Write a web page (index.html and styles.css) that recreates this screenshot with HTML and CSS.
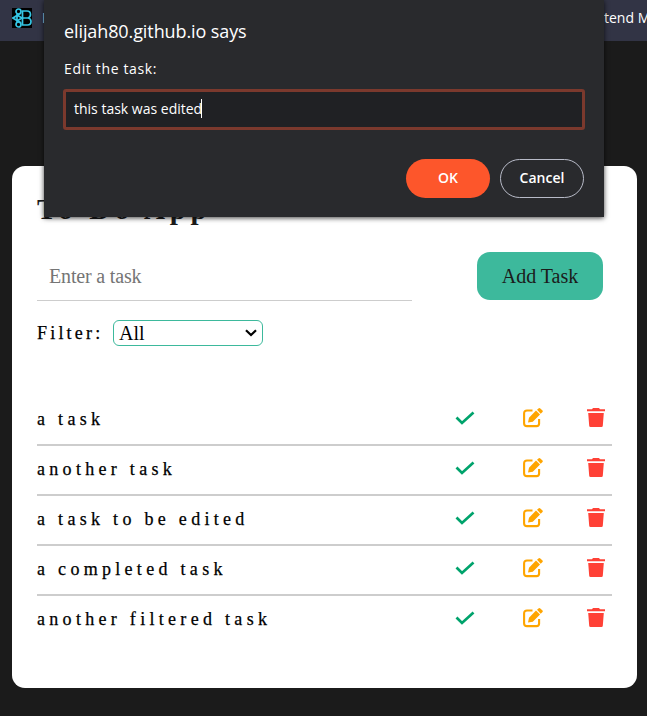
FILE: index.html
```html
<!DOCTYPE html>
<html lang="en">
<head>
<meta charset="utf-8">
<title>To-Do App</title>
<link rel="stylesheet" href="styles.css">
</head>
<body>
<svg class="sprite" aria-hidden="true">
  <symbol id="check" viewBox="0 0 20 20"><path d="M1.500 9.500 7 15 18.500 4.500" fill="none" stroke="#00a36c" stroke-width="2.700"/></symbol>
  <symbol id="edit" viewBox="0 0 20 20"><path d="M9.500 2.500H4Q1.100 2.500 1.100 5.500V15.500Q1.100 18.100 4 18.100H13.500Q16.100 18.100 16.100 15.500V11" fill="none" stroke="orange" stroke-width="2.100"/><path d="M5 14.500 6 9.800 13 2.600 17 6.500 9.800 13.700ZM14 1.800 15.800.3Q16.500-.2 17.300.5L19.500 2.500Q20.200 3.300 19.500 4L17.700 5.700Z" fill="orange"/></symbol>
  <symbol id="trash" viewBox="0 0 18 20"><path d="M0 1.300H5L6 0H12L13 1.300H18V3.200H0ZM1.200 5H16.800L15.800 17.800Q15.700 19 14.500 19H3.500Q2.300 19 2.200 17.800Z" fill="#ff4136"/></symbol>
</svg>
<nav class="bookmarks">
  <svg class="favicon" viewBox="0 0 20 20"><rect width="20" height="20" fill="#000"/><g fill="none" stroke="#35c5e4" stroke-width="1.700"><path d="M10.500 3V17H15.500Q19 17 19 13.500 19 10.500 16 10 18.500 9 18.500 6.500 18.500 3 15 3ZM10.500 10H16"/><circle cx="6.500" cy="3.500" r="2.500"/><circle cx="6.500" cy="16.500" r="2.500"/><path d="M9 5 1 10 9 15M5 6V14M5 7 10 10 5 13"/></g></svg>
  <span class="bm-first">F</span>
  <span class="bm-last">tend M</span>
</nav>
<main class="card">
  <h1>To Do App</h1>
  <div class="entry"><input type="text" placeholder="Enter a task"><button class="add">Add Task</button></div>
  <div class="filter"><span>Filter:</span><div class="select">All<svg viewBox="0 0 12 8"><path d="M1 1.200 6 6 11 1.200" fill="none" stroke="#000" stroke-width="2.200"/></svg></div></div>
  <ul class="tasks">
    <li><span>a task</span><svg class="i-check"><use href="#check"/></svg><svg class="i-edit"><use href="#edit"/></svg><svg class="i-trash"><use href="#trash"/></svg></li>
    <li><span>another task</span><svg class="i-check"><use href="#check"/></svg><svg class="i-edit"><use href="#edit"/></svg><svg class="i-trash"><use href="#trash"/></svg></li>
    <li><span>a task to be edited</span><svg class="i-check"><use href="#check"/></svg><svg class="i-edit"><use href="#edit"/></svg><svg class="i-trash"><use href="#trash"/></svg></li>
    <li><span>a completed task</span><svg class="i-check"><use href="#check"/></svg><svg class="i-edit"><use href="#edit"/></svg><svg class="i-trash"><use href="#trash"/></svg></li>
    <li><span>another filtered task</span><svg class="i-check"><use href="#check"/></svg><svg class="i-edit"><use href="#edit"/></svg><svg class="i-trash"><use href="#trash"/></svg></li>
  </ul>
</main>
<section class="dialog">
  <h2>elijah80.github.io says</h2>
  <p>Edit the task:</p>
  <div class="prompt"><span>this task was edited</span><i></i></div>
  <div class="actions"><button class="ok">OK</button><button class="cancel">Cancel</button></div>
</section>
</body>
</html>
```
FILE: styles.css
```css
* { box-sizing: border-box; }
body { margin: 0; height: 716px; overflow: hidden; background: #1b1b1b; color: #000; font-family: "Liberation Serif", serif; }
.sprite { position: absolute; width: 0; height: 0; }
.bookmarks { height: 41px; background: #323445; display: flex; align-items: flex-start; padding: 8px 0 0 12px; color: #fff; font: 14px/20px "Open Sans", sans-serif; overflow: hidden; white-space: nowrap; }
.favicon { flex: none; width: 20px; height: 20px; }
.bm-first { flex: none; margin-left: 10px; width: 20px; }
.bm-last { flex: none; margin-left: 542px; }
.card { width: 625px; height: 522px; margin: 125px 0 0 12px; padding: 24px 25px 0; background: #fff; border-radius: 13px; }
h1 { margin: 0; height: 62px; font-size: 29px; line-height: 38px; letter-spacing: 4.6px; color: #1b1b1b; }
.entry { display: flex; justify-content: space-between; padding-right: 9px; }
.entry input { width: 375px; height: 49px; border: 0; border-bottom: 1px solid #cdcdcd; padding: 0 12px; font: 20px "Liberation Serif", serif; letter-spacing: -.17px; outline: 0; }
.entry input::placeholder { color: #757575; }
.add { width: 126px; height: 48px; border: 0; border-radius: 13px; background: #3db99c; color: #1b1b1b; font: 20px "Liberation Serif", serif; padding: 0; }
.filter { display: flex; align-items: center; margin-top: 19px; height: 26px; font-size: 18px; letter-spacing: 3.2px; }
.filter > span { width: 76px; -webkit-text-stroke: .25px; }
.select { width: 150px; height: 26px; border: 1px solid #3db99c; border-radius: 6px; padding: 0 5px; display: flex; align-items: center; justify-content: space-between; font-size: 20px; letter-spacing: 0; }
.select svg { width: 12px; height: 8px; }
.tasks { list-style: none; margin: 50px 0 0; padding: 0; }
.tasks li { width: 575px; height: 50px; display: flex; align-items: center; border-bottom: 2px solid #cdcdcd; font-size: 18px; letter-spacing: 4.3px; padding: 0 7px 4px 0; }
.tasks li:last-child { border-color: transparent; }
.tasks span { flex: 1; padding-top: 2px; -webkit-text-stroke: .25px; }
.i-check { width: 20px; height: 20px; margin-right: 48px; }
.i-edit { width: 20px; height: 20px; margin-right: 44px; }
.i-trash { width: 18px; height: 20px; }
.dialog { position: absolute; left: 44px; top: 0; width: 560px; height: 217px; padding: 18px 19px 0; background: #292a2d; box-shadow: 0 1px 5px rgba(0,0,0,.75); color: #fff; font-family: "Open Sans", sans-serif; }
h2 { margin: 0 0 0 1px; font-size: 18px; line-height: 26px; font-weight: 400; letter-spacing: -.1px; }
.dialog p { margin: 15px 0 10px 1px; font-size: 14px; line-height: 20px; letter-spacing: .65px; }
.prompt { height: 41px; border: 3px solid #7b392d; border-radius: 3px; background: #202124; display: flex; align-items: center; padding: 0 0 2px 8px; font-size: 14px; }
.prompt i { width: 1px; height: 19px; background: #fff; margin-left: -1px; }
.actions { display: flex; justify-content: flex-end; gap: 10px; margin: 29px 1px 0; }
.actions button { width: 84px; height: 39px; border: 0; border-radius: 20px; font: 600 14px "Open Sans", sans-serif; color: #fff; padding: 0 0 2px; }
.actions .ok { background: #fd562b; }
.actions .cancel { background: transparent; border: 1px solid #b8bbc8; }
```
